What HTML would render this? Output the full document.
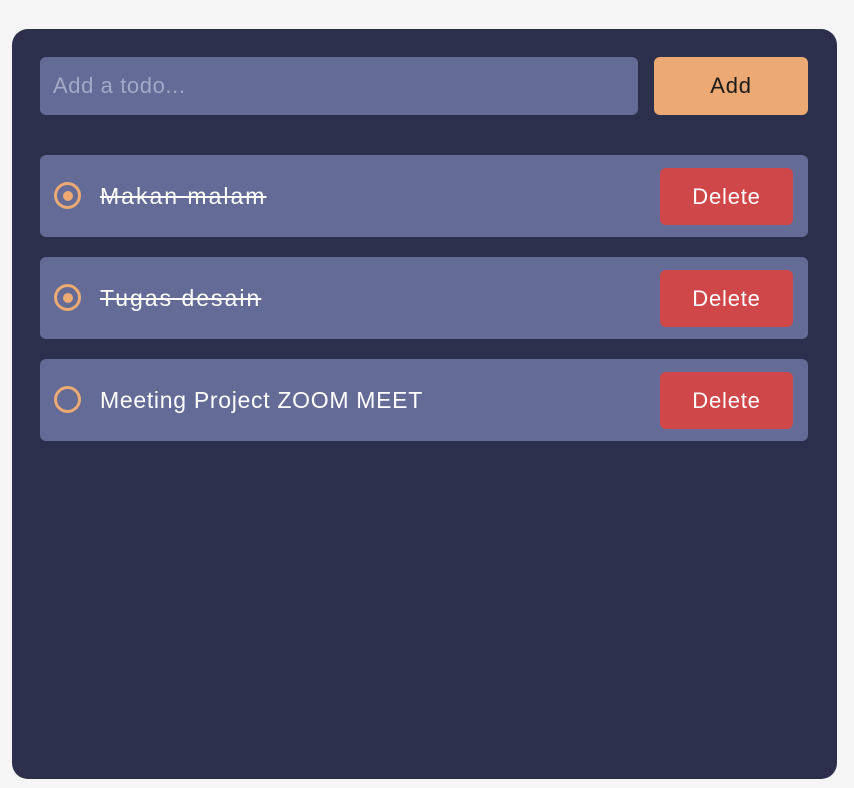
<!DOCTYPE html>
<html><head><style>
body{margin:0;background:#f5f5f5;width:854px;height:788px;overflow:hidden;font-family:"Liberation Sans",sans-serif;}
.card{position:absolute;left:12px;top:29px;width:825px;height:750px;background:#2c304d;border-radius:16px;}
.input{position:absolute;left:28px;top:28px;width:598px;height:58px;background:#636b96;border-radius:6px;color:#a3a9c8;font-size:22px;line-height:58px;padding-left:13px;box-sizing:border-box;letter-spacing:0.6px;}
.add{position:absolute;left:642px;top:28px;width:154px;height:58px;background:#eca973;border-radius:6px;color:#1a1a1a;font-size:22px;line-height:58px;text-align:center;letter-spacing:0.8px;}
.item{position:absolute;left:28px;width:768px;height:82px;background:#636b96;border-radius:6px;}
.radio{position:absolute;left:14px;top:27px;width:21px;height:21px;border:3px solid #eca973;border-radius:50%;}
.radio.on::after{content:"";position:absolute;left:5.5px;top:5.5px;width:10px;height:10px;border-radius:50%;background:#eca973;}
.txt{position:absolute;left:60px;top:0;line-height:82px;font-size:23px;color:#fff;}
.txt.done{text-decoration:line-through;letter-spacing:2px;}
.del{position:absolute;left:620px;top:13px;width:133px;height:57px;background:#d0474a;border-radius:6px;color:#fff;font-size:22px;line-height:57px;text-align:center;letter-spacing:0.8px;}
</style></head><body>
<div class="card">
<div class="input">Add a todo...</div>
<div class="add">Add</div>
<div class="item" style="top:126px"><div class="radio on"></div><div class="txt done">Makan malam</div><div class="del">Delete</div></div>
<div class="item" style="top:228px"><div class="radio on"></div><div class="txt done">Tugas desain</div><div class="del">Delete</div></div>
<div class="item" style="top:330px"><div class="radio"></div><div class="txt" style="letter-spacing:0.7px">Meeting Project ZOOM MEET</div><div class="del">Delete</div></div>
</div>
</body></html>
